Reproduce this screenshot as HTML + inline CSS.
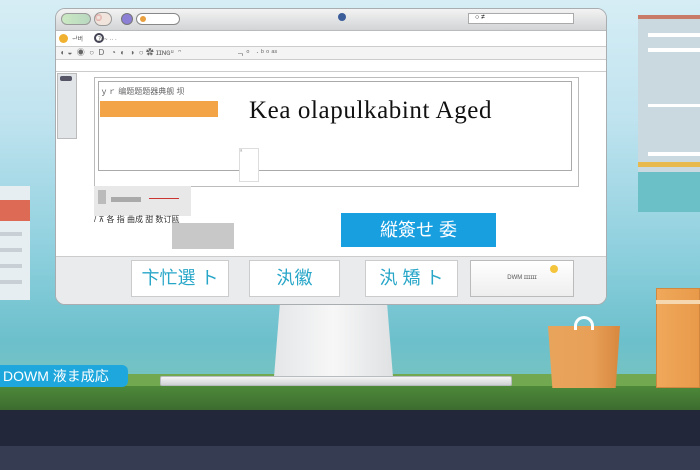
<!DOCTYPE html><html><head><meta charset="utf-8"><style>
*{margin:0;padding:0;box-sizing:border-box}
body{width:700px;height:470px;overflow:hidden;position:relative;font-family:"Liberation Sans","Noto Sans CJK SC",sans-serif;background:linear-gradient(#d6edf5 0,#bfe3ef 120px,#8fd0de 250px,#6cc0cc 340px,#74c3c4 372px)}
.a{position:absolute}
</style></head><body>
<div class="a" style="left:0;top:374px;width:700px;height:12px;background:#72a850"></div>
<div class="a" style="left:0;top:386px;width:700px;height:25px;background:linear-gradient(#4e8a3a,#3b6a2e)"></div>
<div class="a" style="left:0;top:410px;width:700px;height:36px;background:#222739"></div>
<div class="a" style="left:0;top:446px;width:700px;height:24px;background:#363c52"></div>
<div class="a" style="left:0;top:186px;width:30px;height:114px;background:#e6eef2"></div>
<div class="a" style="left:0;top:200px;width:30px;height:21px;background:#dd6a55"></div>
<div class="a" style="left:0;top:232px;width:22px;height:4px;background:#c8d0d6"></div>
<div class="a" style="left:0;top:248px;width:22px;height:4px;background:#c8d0d6"></div>
<div class="a" style="left:0;top:264px;width:22px;height:4px;background:#c8d0d6"></div>
<div class="a" style="left:0;top:280px;width:22px;height:4px;background:#c8d0d6"></div>
<div class="a" style="left:0;top:365px;width:128px;height:22px;background:#1ea7dc;border-radius:0 6px 6px 0;color:#fff;font-size:14px;line-height:22px;padding-left:3px">DOWM 液ま成応</div>
<div class="a" style="left:638px;top:15px;width:62px;height:195px;background:#c9d9df"></div>
<div class="a" style="left:638px;top:15px;width:62px;height:4px;background:#c87b66"></div>
<div class="a" style="left:648px;top:33px;width:52px;height:4px;background:#fff"></div>
<div class="a" style="left:648px;top:48px;width:52px;height:4px;background:#fff"></div>
<div class="a" style="left:648px;top:104px;width:52px;height:3px;background:#fff"></div>
<div class="a" style="left:648px;top:152px;width:52px;height:4px;background:#fff"></div>
<div class="a" style="left:638px;top:162px;width:62px;height:5px;background:#e8b94c"></div>
<div class="a" style="left:638px;top:172px;width:62px;height:40px;background:#6bbfc6"></div>
<div class="a" style="left:656px;top:288px;width:44px;height:100px;background:linear-gradient(90deg,#f0a85a,#e89a4a);border:1px solid #d08840"></div>
<div class="a" style="left:656px;top:300px;width:44px;height:4px;background:#f6d8b0"></div>
<div class="a" style="left:548px;top:326px;width:72px;height:62px;background:linear-gradient(90deg,#e9a45c,#e8a058 60%,#d8883f);clip-path:polygon(0 0,100% 0,94% 100%,6% 100%)"></div>
<div class="a" style="left:574px;top:316px;width:20px;height:14px;border:3px solid #fff;border-bottom:none;border-radius:10px 10px 0 0"></div>
<div class="a" style="left:274px;top:303px;width:119px;height:74px;background:linear-gradient(90deg,#e4e6e8,#f7f7f7,#dfe1e3);clip-path:polygon(5% 0,95% 0,100% 100%,0 100%)"></div>
<div class="a" style="left:160px;top:376px;width:352px;height:10px;background:linear-gradient(#f5f5f5,#cfd2d4);border-radius:2px;border:1px solid #b8bcbf"></div>
<div class="a" style="left:55px;top:8px;width:552px;height:297px;background:#eceeef;border:1px solid #a9adb0;border-radius:10px;overflow:hidden">
 <div class="a" style="left:0;top:0;width:552px;height:22px;background:linear-gradient(#f3f3f3,#d2d4d6);border-bottom:1px solid #b8bbbd"></div>
 <div class="a" style="left:5px;top:4px;width:30px;height:12px;border-radius:6px;background:linear-gradient(90deg,#cbe9c3,#b9d8c0);border:1px solid #999"></div>
 <div class="a" style="left:38px;top:3px;width:18px;height:14px;border-radius:7px;background:#f0e4dc;border:1px solid #999;font-size:7px;color:#c55">◎</div>
 <div class="a" style="left:65px;top:4px;width:12px;height:12px;border-radius:50%;background:#8b7fd6;border:1px solid #777"></div>
 <div class="a" style="left:80px;top:4px;width:44px;height:12px;border-radius:6px;background:#fff;border:1px solid #888"></div>
 <div class="a" style="left:84px;top:7px;width:6px;height:6px;border-radius:50%;background:#e8a040"></div>
 <div class="a" style="left:282px;top:4px;width:8px;height:8px;border-radius:50%;background:#3b5d9a"></div>
 <div class="a" style="left:412px;top:4px;width:106px;height:11px;background:#fff;border:1px solid #aaa;font-size:7px;padding-left:6px">○ ≠</div>
 <div class="a" style="left:0;top:22px;width:552px;height:15px;background:#fff"></div>
 <div class="a" style="left:3px;top:25px;width:9px;height:9px;border-radius:50%;background:#f0b030"></div>
 <div class="a" style="left:38px;top:24px;width:10px;height:10px;border-radius:50%;border:2px solid #445"></div>
 <div class="a" style="left:16px;top:25px;font-size:6px;color:#555">ᆉ버 &nbsp;&nbsp;&nbsp;&nbsp;&nbsp;&nbsp;&nbsp;&nbsp;ｱｯ~ ·· ·</div>
 <div class="a" style="left:0;top:37px;width:552px;height:14px;background:#f4f4f4;border-top:1px solid #ccc;border-bottom:1px solid #ccc;font-size:8px;color:#666;line-height:12px;white-space:pre">  ◐ ◒  ◉  ○  D   ◔  ◐  ◑  ○ ✿ ɪɪɴɢᵘ  ᵔ                         ᆨ ᵒ   · ᵇ ᵒ ᵃˢ</div>
 <div class="a" style="left:0;top:51px;width:552px;height:12px;background:#fff;border-bottom:1px solid #ccc"></div>
 <div class="a" style="left:0;top:63px;width:552px;height:185px;background:#fff"></div>
 <div class="a" style="left:1px;top:64px;width:20px;height:66px;background:#e2e5e8;border:1px solid #bbb"></div>
 <div class="a" style="left:4px;top:67px;width:12px;height:5px;background:#556;border-radius:2px"></div>
 <div class="a" style="left:38px;top:68px;width:485px;height:110px;border:1px solid #bbb;background:#fff"></div>
 <div class="a" style="left:42px;top:72px;width:474px;height:90px;border:1px solid #aaa"></div>
 <div class="a" style="left:44px;top:77px;font-size:8px;color:#666">ｙｒ 编题题题器典舰 坝</div>
 <div class="a" style="left:44px;top:92px;width:118px;height:16px;background:#f3a447"></div>
 <div class="a" style="left:193px;top:88px;font-family:'Liberation Serif',serif;font-size:25px;letter-spacing:0.6px;color:#111">Kea olapulkabint Aged</div>
 <div class="a" style="left:183px;top:139px;width:20px;height:34px;background:#fff;border:1px solid #ddd;font-size:6px;color:#999">ᵃ</div>
 <div class="a" style="left:38px;top:177px;width:97px;height:30px;background:#e8e8e8"></div>
 <div class="a" style="left:42px;top:181px;width:8px;height:14px;background:#bbb"></div>
 <div class="a" style="left:55px;top:188px;width:30px;height:5px;background:#aaa"></div>
 <div class="a" style="left:93px;top:189px;width:30px;height:1px;background:#c33"></div>
 <div class="a" style="left:38px;top:205px;font-size:8px;color:#333">/ ⊼ 各 指 曲成 甜 数订瓯</div>
 <div class="a" style="left:116px;top:214px;width:62px;height:26px;background:#c8c8c8"></div>
 <div class="a" style="left:285px;top:204px;width:155px;height:34px;background:#189fe0;color:#fff;font-size:18px;text-align:center;line-height:34px">縦簽せ 委</div>
 <div class="a" style="left:0;top:247px;width:552px;height:50px;background:#e9ebec;border-top:1px solid #ccc"></div>
 <div class="a" style="left:75px;top:251px;width:98px;height:37px;background:#fff;border:1px solid #ccc;color:#27a6c8;font-size:18px;text-align:center;line-height:35px">卞忙選 ト</div>
 <div class="a" style="left:193px;top:251px;width:91px;height:37px;background:#fff;border:1px solid #ccc;color:#27a6c8;font-size:18px;text-align:center;line-height:35px">汍徽</div>
 <div class="a" style="left:309px;top:251px;width:93px;height:37px;background:#fff;border:1px solid #ccc;color:#27a6c8;font-size:18px;text-align:center;line-height:35px">汍 矯 ト</div>
 <div class="a" style="left:414px;top:251px;width:104px;height:37px;background:linear-gradient(#fff,#eee);border:1px solid #bbb;color:#555;font-size:6px;text-align:center;line-height:35px">DWM ɪɪɪɪɪɪ</div>
 <div class="a" style="left:494px;top:256px;width:8px;height:8px;border-radius:50%;background:#f3c43c"></div>
</div>
</body></html>
